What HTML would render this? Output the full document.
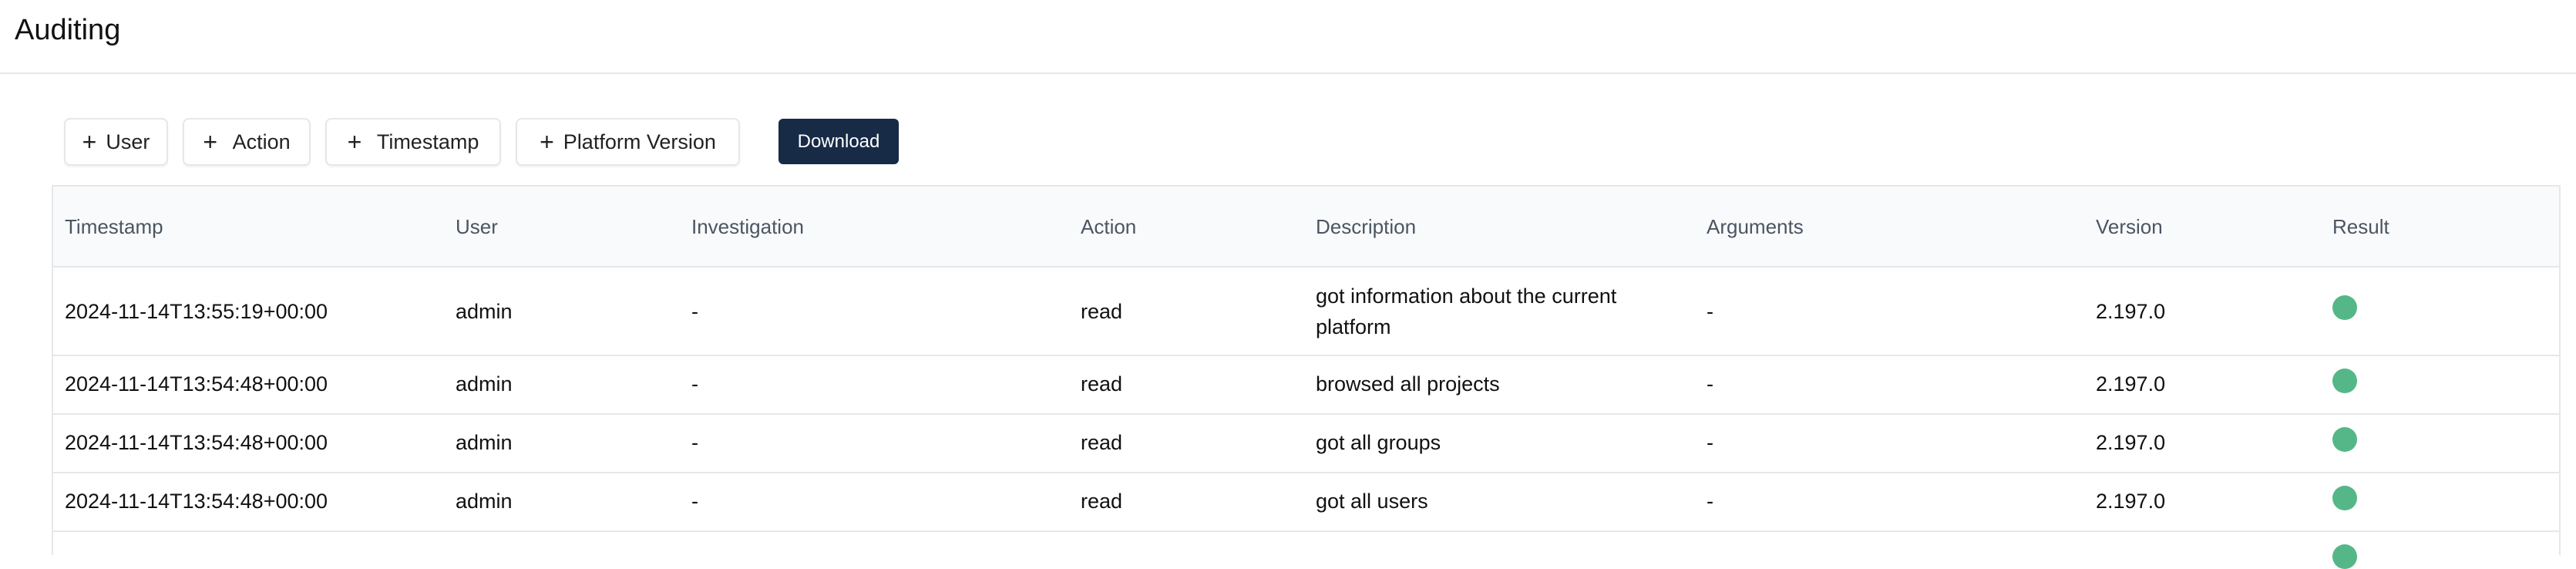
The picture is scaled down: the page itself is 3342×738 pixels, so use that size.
<!DOCTYPE html>
<html><head><meta charset="utf-8"><style>
*{margin:0;padding:0;box-sizing:border-box}
body{width:3342px;height:708px;overflow:hidden;background:#fff;font-family:"Liberation Sans",sans-serif;color:#111;position:relative}
.a{position:absolute;white-space:nowrap}
.title{left:19px;top:18px;font-size:38px;color:#111}
.hline{position:absolute;left:0;top:94px;width:3342px;height:2px;background:#e5e7eb}
.btn{position:absolute;top:153px;height:62px;border:2px solid #e5e7eb;border-radius:8px;background:#fff;font-size:27px;color:#222;display:flex;align-items:center;justify-content:center;box-shadow:0 2px 2px rgba(0,0,0,.05)}
.btn span.p{font-size:32px;margin-right:12px;font-weight:300}
.dl{position:absolute;left:1010px;top:154px;width:156px;height:59px;background:#172a46;border-radius:6px;color:#fff;font-size:24px;display:flex;align-items:center;justify-content:center}
.tbl{position:absolute;left:67px;top:240px;width:3255px;height:480px;border:2px solid #e5e7eb;border-bottom:none}
.thead{position:absolute;left:69px;top:242px;width:3251px;height:105px;background:#f9fafb;border-bottom:2px solid #e5e7eb}
.th{position:absolute;top:279px;font-size:26px;color:#4b5563}
.rl{position:absolute;left:69px;width:3251px;height:2px;background:#e5e7eb}
.td{position:absolute;font-size:27px;color:#111;line-height:34px}
.dot{position:absolute;left:3026px;width:32px;height:32px;border-radius:50%;background:#55b788}
</style></head><body>
<div class="a title">Auditing</div>
<div class="hline"></div>
<div class="btn" style="left:83px;width:135px"><span class="p">+</span>User</div>
<div class="btn" style="left:237px;width:166px"><span class="p">+</span>&nbsp;Action</div>
<div class="btn" style="left:422px;width:228px"><span class="p">+</span>&nbsp;Timestamp</div>
<div class="btn" style="left:669px;width:291px"><span class="p">+</span>Platform Version</div>
<div class="dl">Download</div>
<div class="tbl"></div>
<div class="thead"></div>
<div class="a th" style="left:84px">Timestamp</div>
<div class="a th" style="left:591px">User</div>
<div class="a th" style="left:897px">Investigation</div>
<div class="a th" style="left:1402px">Action</div>
<div class="a th" style="left:1707px">Description</div>
<div class="a th" style="left:2214px">Arguments</div>
<div class="a th" style="left:2719px">Version</div>
<div class="a th" style="left:3026px">Result</div>
<div class="rl" style="top:460px"></div>
<div class="rl" style="top:536px"></div>
<div class="rl" style="top:612px"></div>
<div class="rl" style="top:688px"></div>

<div class="a td" style="left:84px;top:387px">2024-11-14T13:55:19+00:00</div>
<div class="a td" style="left:591px;top:387px">admin</div>
<div class="a td" style="left:897px;top:387px">-</div>
<div class="a td" style="left:1402px;top:387px">read</div>
<div class="a td" style="left:1707px;top:364px;line-height:40px">got information about the current<br>platform</div>
<div class="a td" style="left:2214px;top:387px">-</div>
<div class="a td" style="left:2719px;top:387px">2.197.0</div>
<div class="dot" style="top:383px"></div>

<div class="a td" style="left:84px;top:481px">2024-11-14T13:54:48+00:00</div>
<div class="a td" style="left:591px;top:481px">admin</div>
<div class="a td" style="left:897px;top:481px">-</div>
<div class="a td" style="left:1402px;top:481px">read</div>
<div class="a td" style="left:1707px;top:481px">browsed all projects</div>
<div class="a td" style="left:2214px;top:481px">-</div>
<div class="a td" style="left:2719px;top:481px">2.197.0</div>
<div class="dot" style="top:478px"></div>

<div class="a td" style="left:84px;top:557px">2024-11-14T13:54:48+00:00</div>
<div class="a td" style="left:591px;top:557px">admin</div>
<div class="a td" style="left:897px;top:557px">-</div>
<div class="a td" style="left:1402px;top:557px">read</div>
<div class="a td" style="left:1707px;top:557px">got all groups</div>
<div class="a td" style="left:2214px;top:557px">-</div>
<div class="a td" style="left:2719px;top:557px">2.197.0</div>
<div class="dot" style="top:554px"></div>

<div class="a td" style="left:84px;top:633px">2024-11-14T13:54:48+00:00</div>
<div class="a td" style="left:591px;top:633px">admin</div>
<div class="a td" style="left:897px;top:633px">-</div>
<div class="a td" style="left:1402px;top:633px">read</div>
<div class="a td" style="left:1707px;top:633px">got all users</div>
<div class="a td" style="left:2214px;top:633px">-</div>
<div class="a td" style="left:2719px;top:633px">2.197.0</div>
<div class="dot" style="top:630px"></div>

<div class="dot" style="top:706px"></div>
</body></html>
